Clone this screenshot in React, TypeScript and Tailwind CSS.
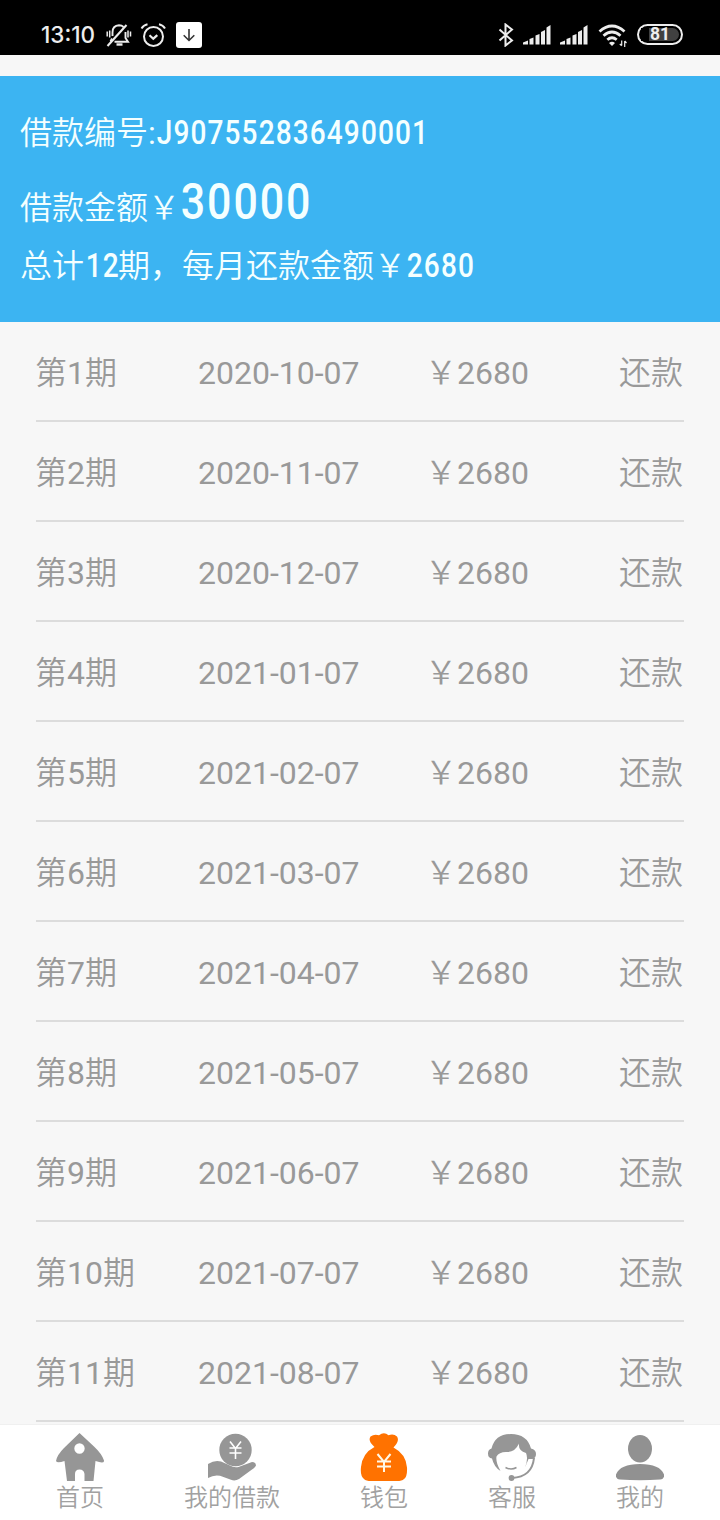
import type { ReactNode } from "react";

const installments = [
  "2020-10-07",
  "2020-11-07",
  "2020-12-07",
  "2021-01-07",
  "2021-02-07",
  "2021-03-07",
  "2021-04-07",
  "2021-05-07",
  "2021-06-07",
  "2021-07-07",
  "2021-08-07",
];

function SignalIcon() {
  return (
    <svg className="h-[22px] w-7" viewBox="0 0 28 22" fill="#ededed">
      <path d="M0 20.500v-2l5-2v4zM6.500 20.500V15l4-1.500v7zM12.500 20.500v-9l4-1.500v10.500zM18 20.500V8l4-2v14.500zM23.500 20.500V3.500L27.500 1v19.500z" />
    </svg>
  );
}

function StatusBar() {
  return (
    <div className="flex h-[55px] shrink-0 items-center bg-black pt-3.5 pr-[37px] pl-10 text-[#ededed]">
      <span className="w-[66px] pt-0.5 pl-px font-['Inter',sans-serif] text-[22.5px] leading-none font-medium">
        13:10
      </span>

      {/* Muted bell */}
      <svg className="h-6 w-[26px]" viewBox="0 0 26 24" fill="none" stroke="currentColor" strokeWidth="1.9">
        <path d="M6.500 13V9.500C6.500 5 9 2.500 13 2.300c2 0 3.500.7 4.600 1.700M19.500 9v6l2.500 3.800H8.500M6 15.500l-1.500 3" />
        <path d="M1.500 23L20.500 2" strokeWidth="2.100" />
        <path d="M10.500 21.500h6" strokeWidth="2.400" />
        <path d="M1.200 8.500v5M3.700 7.500v7M22 7.500v7M24.500 8.500v5" strokeWidth="1.500" />
      </svg>

      {/* Alarm clock */}
      <svg className="ml-2 h-6 w-[26px]" viewBox="0 0 26 24" fill="none" stroke="currentColor" strokeWidth="2">
        <circle cx="13.500" cy="13.500" r="9.500" />
        <path d="M9.500 12.200l3.800 3.500 4-3.500" strokeWidth="2.200" />
        <path d="M1.500 5.500Q3.500 2 7.500 1.200M19 1.200q4 .8 6 4.300" />
      </svg>

      {/* Download badge */}
      <span className="ml-[10px] flex size-[26px] items-center justify-center rounded-[3px] bg-white">
        <svg className="size-4" viewBox="0 0 16 16" fill="none" stroke="#333" strokeWidth="1.600">
          <path d="M8 2v11.500M2.700 8.300L8 13.500l5.300-5.200" />
        </svg>
      </span>

      <div className="ml-auto flex items-center">
        <svg className="mr-[9px] h-6 w-4" viewBox="0 0 16 24" fill="none" stroke="currentColor" strokeWidth="2">
          <path d="M1.500 6.500l12.500 11-6.500 5V1.500L14 6.500l-12.500 11" />
        </svg>
        <SignalIcon />
        <span className="w-[9px]" />
        <SignalIcon />

        {/* Wifi */}
        <svg className="ml-[10px] h-6 w-[30px]" viewBox="0 0 30 24" fill="none" stroke="currentColor" strokeWidth="2.800">
          <path d="M1.500 8.500q12.500-11 25 0M5.500 12.700q8.500-7.500 17 0M9.300 16.800q4.700-4 9.400 0" />
          <path d="M11 20q3-2.500 6 0l-3 3z" fill="currentColor" stroke="none" />
          <path d="M23.700 17.500v5M26.700 18v6M21.800 21l1.900 1.700M26.700 18l1.800 2" strokeWidth="1.200" />
        </svg>

        {/* Battery */}
        <span className="ml-[9px] flex h-[21px] w-[46px] items-center justify-center rounded-full border-2 border-[#ededed] p-0.5 font-['Roboto',sans-serif] text-[17.5px] leading-none font-bold">
          <span className="flex h-[13px] w-full items-center justify-center rounded-r-full bg-[linear-gradient(90deg,#000_8px,#404040_8px)] pt-px">
            81
          </span>
        </span>
      </div>
    </div>
  );
}

function Num({ className, children }: { className: string; children: ReactNode }) {
  return (
    <span className={`inline-block origin-left scale-x-[0.85] pl-0.5 font-medium ${className}`}>
      {children}
    </span>
  );
}

function LoanSummary() {
  return (
    <section className="mt-[21px] h-[246px] shrink-0 bg-[#3cb4f2] px-5 pt-[33px] text-[32px] font-[350] whitespace-nowrap text-[#f4ffff]">
      <p className="h-[69px] leading-[48px]">
        借款编号<span className="font-normal">:</span>
        <Num className="-ml-px text-[33px] tracking-[1.3px]">J907552836490001</Num>
      </p>
      <p className="h-[65px] leading-[48px]">
        借款金额￥<Num className="-ml-px text-[50.500px] tracking-[2.3px]">30000</Num>
      </p>
      <p className="-mt-px leading-[48px]">
        总计<Num className="w-[34px] text-[33px] tracking-[1.35px]">12</Num>期，每月还款金额￥
        <Num className="-ml-px text-[33px] tracking-[1.35px]">2680</Num>
      </p>
    </section>
  );
}

const HomeIcon = (
  <svg className="size-12" viewBox="0 0 48 48" fill="#969696">
    <path
      fillRule="evenodd"
      d="M23.500 0L38 13.500Q46 21 48 27.500q.5 3.500-8.500.5L37.500 48h-9V41q-.5-4.500-5-4.500T19 41v7h-8L8.500 28Q1 30.500 0 28q1-6 8-13zM23.500 10.300a5.200 5.200 0 1 0 0 10.400 5.200 5.200 0 0 0 0-10.400z"
    />
  </svg>
);

const LoanIcon = (
  <svg className="size-12" viewBox="0 0 48 48" fill="#969696">
    <circle cx="27.500" cy="17" r="16.200" />
    <path d="M22 8.500l5.500 7 5.500-7M27.500 15.500V26M21.500 15h12M21.500 20h12" fill="none" stroke="#fff" strokeWidth="1.600" />
    <path d="M0 31q7-4.500 13-2.500l9 4q4 2.500 8.500 1.500L44 29q4 0 4 3.500-1 2-4 4L31 46q-4 2.500-8 .8l-11-4Q6 41.500 0 45z" />
  </svg>
);

const WalletIcon = (
  <svg className="size-12" viewBox="0 0 48 48" fill="#ff7200">
    <path d="M14.500 14Q7.500 8 10.500 3.500q4-3 8.500-1.200Q24-2 28.500 2.300q5-2 8.500 1.200 3 4.500-3.500 11Q46 21 47 34.500q.5 9-3 11.500-2 2-7 2H11q-5 0-7-2-4-3-3-12Q2.500 20 14.500 14z" />
    <path d="M17.500 21l6.500 8 6.500-8M24 28.500V39M17 28.500h14M17 33.500h14" fill="none" stroke="#fff8e8" strokeWidth="2" />
  </svg>
);

const ServiceIcon = (
  <svg className="size-12" viewBox="0 0 48 48" fill="#969696">
    <path d="M3.500 15.500Q7 1 23 1t20 14.500q5 1 5 5.500 0 4-3.500 5h-4l-3.500 8.500q3.500-9 1-14.500-8-2-7-9.500-4 9-13 8.500-7 0-9.500 4.500-1 6 4 14.500Q6 34 4 25.500q-4-.5-4-5 0-4 3.500-5z" />
    <path d="M17.500 34.500q5.500 3 11 0" fill="none" stroke="#969696" strokeWidth="1.500" />
    <path d="M46 25Q44 44 24 45" fill="none" stroke="#969696" strokeWidth="2" />
    <circle cx="23.500" cy="45" r="2.900" />
  </svg>
);

const UserIcon = (
  <svg className="size-12" viewBox="0 0 48 48" fill="#919191">
    <ellipse cx="24" cy="15.700" rx="12" ry="13.700" />
    <path d="M0 41.500Q4 31 24 31t24 10.500q.5 4.500-4 5-20 1.500-40 0Q-.5 46 0 41.500z" />
  </svg>
);

const tabs = [
  { label: "首页", icon: HomeIcon },
  { label: "我的借款", icon: LoanIcon },
  { label: "钱包", icon: WalletIcon },
  { label: "客服", icon: ServiceIcon },
  { label: "我的", icon: UserIcon },
];

export default function App() {
  return (
    <div className="flex h-[1520px] w-[720px] flex-col overflow-hidden bg-[#f7f7f7] font-['Roboto','Noto_Sans_CJK_SC',sans-serif]">
      <StatusBar />
      <LoanSummary />

      {/* Repayment schedule */}
      <ul className="min-h-0 flex-1 px-9">
        {installments.map((date, i) => (
          <li
            key={date}
            className="grid h-[100px] grid-cols-[162px_227px_1fr_auto] items-center border-b-2 border-[#dcdcdc] pt-[3px] text-[32px] font-[350] text-[#999]"
          >
            <span className="-ml-px">
              第<span className="font-normal">{i + 1}</span>期
            </span>
            <span className="font-normal">{date}</span>
            <span>
              ￥<span className="font-normal">2680</span>
            </span>
            <span className="mr-px">还款</span>
          </li>
        ))}
      </ul>

      <nav className="flex h-24 shrink-0 justify-center border-t border-[#f0f0f0] bg-white pt-2">
        {tabs.map((tab) => (
          <div key={tab.label} className="flex flex-col items-center px-10">
            {tab.icon}
            <span className="pt-px text-2xl leading-8 font-[350] text-[#a1a1a1]">{tab.label}</span>
          </div>
        ))}
      </nav>
    </div>
  );
}
